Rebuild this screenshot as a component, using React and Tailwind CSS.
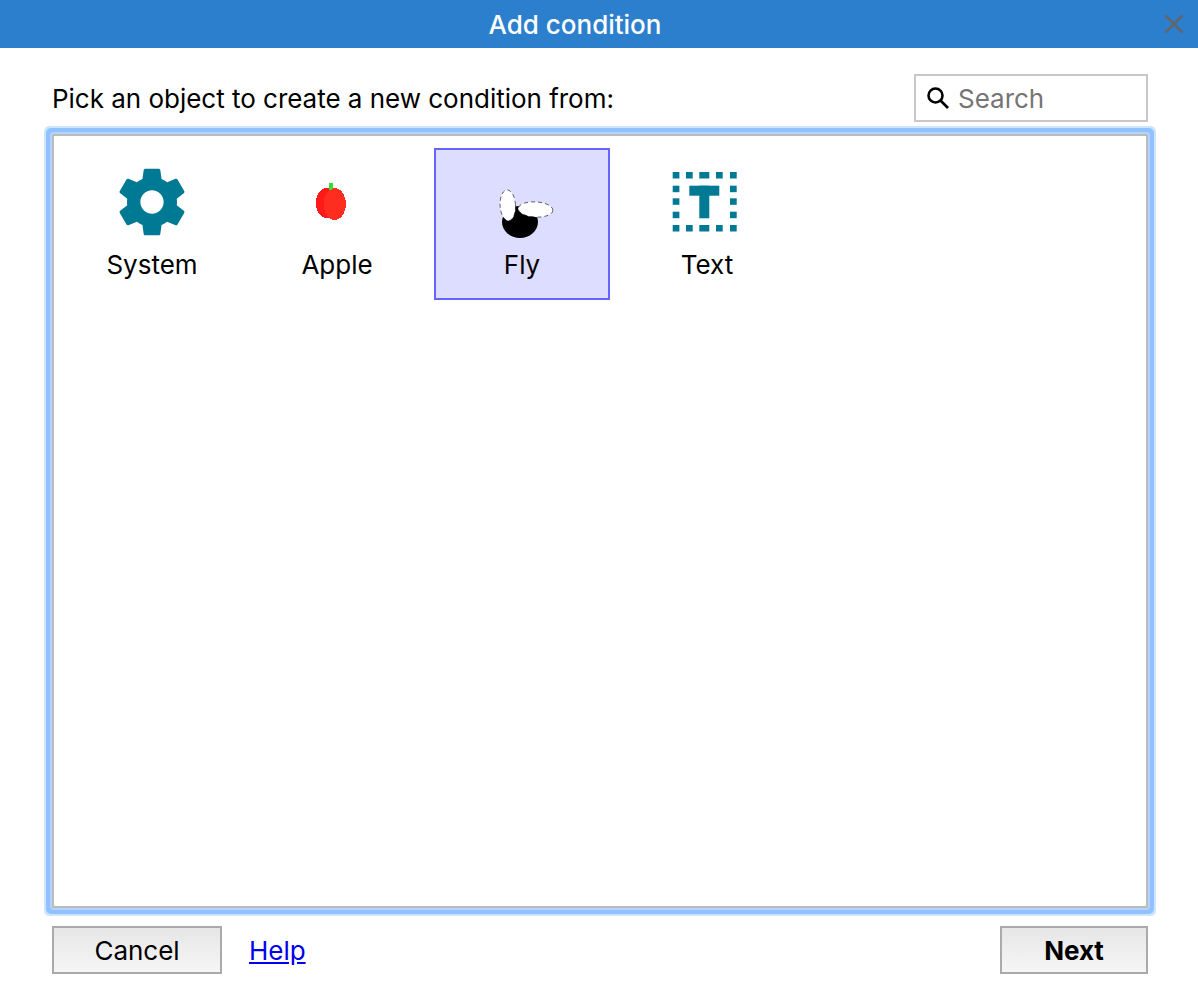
import React from "react";

const SystemIcon = () => (
  <svg width="80" height="80" viewBox="0 0 24 24" fill="#007a94">
    <path d="M19.43 12.98c.04-.32.07-.64.07-.98s-.03-.66-.07-.98l2.11-1.65c.19-.15.24-.42.12-.64l-2-3.46c-.12-.22-.39-.3-.61-.22l-2.49 1c-.52-.4-1.08-.73-1.69-.98l-.38-2.65C14.46 2.18 14.25 2 14 2h-4c-.25 0-.46.18-.49.42l-.38 2.65c-.61.25-1.17.59-1.69.98l-2.49-1c-.23-.09-.49 0-.61.22l-2 3.46c-.13.22-.07.49.12.64l2.11 1.65c-.04.32-.07.65-.07.98s.03.66.07.98l-2.11 1.65c-.19.15-.24.42-.12.64l2 3.46c.12.22.39.3.61.22l2.49-1c.52.4 1.08.73 1.69.98l.38 2.65c.03.24.24.42.49.42h4c.25 0 .46-.18.49-.42l.38-2.65c.61-.25 1.17-.59 1.69-.98l2.49 1c.23.09.49 0 .61-.22l2-3.46c.12-.22.07-.49-.12-.64l-2.11-1.65zM12 15.5c-1.93 0-3.5-1.57-3.5-3.5s1.57-3.5 3.5-3.5 3.5 1.57 3.5 3.5-1.57 3.5-3.5 3.5z" />
  </svg>
);

const AppleIcon = () => (
  <svg width="80" height="80" viewBox="0 0 80 80" shapeRendering="crispEdges">
    <ellipse cx="29.8" cy="41" rx="11" ry="15" fill="#ff1a1a" />
    <ellipse cx="37.8" cy="42" rx="11" ry="16" fill="#ff2d20" />
    <ellipse cx="34" cy="24.5" rx="2.2" ry="3.8" fill="#33dd33" />
  </svg>
);

const FlyIcon = () => (
  <svg width="80" height="80" viewBox="0 0 80 80">
    <ellipse cx="38" cy="60" rx="18" ry="16" fill="#000" />
    <ellipse
      cx="25.8"
      cy="43.3"
      rx="7.7"
      ry="15.4"
      fill="#fff"
      stroke="#000"
      strokeWidth="0.6"
      strokeDasharray="4 3"
      transform="rotate(-3 25.8 43.3)"
    />
    <ellipse
      cx="53.5"
      cy="47.5"
      rx="17.4"
      ry="7.6"
      fill="#fff"
      stroke="#000"
      strokeWidth="0.6"
      strokeDasharray="4 3"
      transform="rotate(3 53.5 47.5)"
    />
  </svg>
);

const TextIcon = () => {
  const xs = [5.7, 19, 32.3, 49, 63];
  const ys = [23.7, 36.3, 49.7];
  return (
    <svg width="80" height="80" viewBox="0 0 80 80" fill="#007a94">
      {xs.map((x, i) => (
        <React.Fragment key={x}>
          <rect x={x} y={10} width={i === 2 ? 10 : 6.7} height={6.5} />
          <rect x={x} y={63} width={i === 2 ? 10 : 6.7} height={6.5} />
        </React.Fragment>
      ))}
      {ys.map((y) => (
        <React.Fragment key={y}>
          <rect x={5.7} y={y} width={6.7} height={6.5} />
          <rect x={63} y={y} width={6.7} height={6.5} />
        </React.Fragment>
      ))}
      <rect x={22.3} y={23.7} width={30} height={10} />
      <rect x={32.3} y={23.7} width={10} height={32.6} />
    </svg>
  );
};

const ObjectItem = ({ icon, label, selected }) => (
  <div
    className={
      "w-[176px] h-[152px] flex flex-col items-center pt-3 border-2 " +
      (selected ? "bg-[#ddddff] border-[#6666ff]" : "border-transparent")
    }
  >
    {icon}
    <span className="mt-2 leading-[30px]">{label}</span>
  </div>
);

const Button = ({ children, className = "" }) => (
  <button
    className={
      "h-12 border-2 border-[#aaaaaa] bg-gradient-to-b from-[#e6e6e6] to-[#f6f6f6] text-black " +
      className
    }
  >
    {children}
  </button>
);

export default function App() {
  return (
    <div className="w-[1198px] h-[1000px] bg-white flex flex-col text-[26px] tracking-[-0.02px] text-black font-['Inter',sans-serif] overflow-hidden">
      <div className="h-12 shrink-0 bg-[#2b7fcd] flex items-center">
        <div className="flex-1 text-center text-white font-medium">Add condition</div>
        <div className="w-12 flex justify-center">
          <svg width="20" height="20" viewBox="0 0 20 20" stroke="#5f666c" strokeWidth="2.6" fill="none">
            <path d="M1.5 1.5L18.5 18.5M18.5 1.5L1.5 18.5" />
          </svg>
        </div>
      </div>

      <div className="flex-1 flex flex-col pl-[52px] pr-[50px] pt-[26px] pb-[26px] min-h-0">
        <div className="flex items-center justify-between h-12 shrink-0">
          <span>Pick an object to create a new condition from:</span>
          <div className="w-[234px] h-12 border-2 border-[#c8c8c8] flex items-center pl-[10px] gap-[8px]">
            <svg width="24" height="24" viewBox="0 0 24 24" fill="none" stroke="#000" strokeWidth="2.6">
              <circle cx="9.5" cy="9.5" r="7" />
              <path d="M14.5 14.5L22 22" />
            </svg>
            <input
              placeholder="Search"
              className="w-[170px] outline-none bg-transparent placeholder:text-[#757575]"
            />
          </div>
        </div>

        <div className="flex-1 mt-3 border-2 border-[#bbbbbb] rounded-[1.5px] bg-white shadow-[0_0_0_2px_#b3d5fd,0_0_0_6px_#8fc2ff,0_0_0_8px_#cfe4fd] flex items-start gap-[9px] pl-[10px] pt-3 min-h-0">
          <ObjectItem icon={<SystemIcon />} label="System" />
          <ObjectItem icon={<AppleIcon />} label="Apple" />
          <ObjectItem icon={<FlyIcon />} label="Fly" selected />
          <ObjectItem icon={<TextIcon />} label="Text" />
        </div>

        <div className="mt-[18px] flex items-center shrink-0">
          <Button className="w-[170px]">Cancel</Button>
          <a href="#help" className="ml-[27px] text-[#0000ee] underline">
            Help
          </a>
          <Button className="ml-auto w-[148px] font-bold">Next</Button>
        </div>
      </div>
    </div>
  );
}
